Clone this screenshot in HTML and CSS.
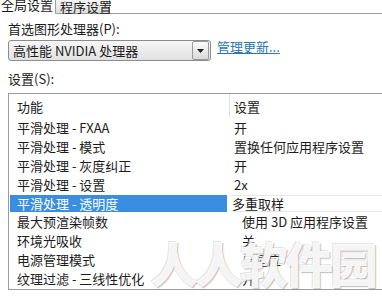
FILE: index.html
```html
<!DOCTYPE html>
<html lang="zh-CN">
<head>
    <meta charset="UTF-8">
    <title>全局设置</title>
    <link rel="stylesheet" href="styles.css">
</head>
<body>
    <div class="window">
        <div class="tabs">
            <div class="tab active">全局设置</div>
            <div class="tab">程序设置</div>
            <div class="tab-fill"></div>
        </div>

        <div class="panel">
            <div class="label first">首选图形处理器(P):</div>
            <div class="select-row">
                <div class="select">
                    <span class="select-text">高性能 NVIDIA 处理器</span>
                    <span class="select-btn">
                        <svg width="7" height="4" viewBox="0 0 7 4"><path d="M0 0h7L3.5 4z" fill="#222"/></svg>
                    </span>
                </div>
                <a class="link" href="#">管理更新...</a>
            </div>

            <div class="label">设置(S):</div>
            <div class="list">
                <div class="row head">
                    <div class="cell name">功能</div>
                    <div class="cell value divider">设置</div>
                </div>
                <div class="row">
                    <div class="cell name">平滑处理 - FXAA</div>
                    <div class="cell value">开</div>
                </div>
                <div class="row">
                    <div class="cell name">平滑处理 - 模式</div>
                    <div class="cell value">置换任何应用程序设置</div>
                </div>
                <div class="row">
                    <div class="cell name">平滑处理 - 灰度纠正</div>
                    <div class="cell value">开</div>
                </div>
                <div class="row">
                    <div class="cell name">平滑处理 - 设置</div>
                    <div class="cell value">2x</div>
                </div>
                <div class="row selected">
                    <div class="cell name">平滑处理 - 透明度</div>
                    <div class="cell value edit">多重取样</div>
                </div>
                <div class="row">
                    <div class="cell name">最大预渲染帧数</div>
                    <div class="cell value indent">使用 3D 应用程序设置</div>
                </div>
                <div class="row">
                    <div class="cell name">环境光吸收</div>
                    <div class="cell value indent">关</div>
                </div>
                <div class="row">
                    <div class="cell name">电源管理模式</div>
                    <div class="cell value indent">自适应</div>
                </div>
                <div class="row">
                    <div class="cell name">纹理过滤 - 三线性优化</div>
                    <div class="cell value indent">开</div>
                </div>
            </div>
        </div>

        <div class="watermark">人人软件园</div>
    </div>
</body>
</html>
```

FILE: styles.css
```css
body {
    margin: 0;
    background-color: #fff;
    font-family: "Noto Sans CJK SC", "DejaVu Sans", sans-serif;
    font-size: 13px;
    color: #1c1c1c;
    overflow: hidden;
}

.window {
    position: relative;
    width: 382px;
    height: 298px;
    overflow: hidden;
}

.tabs {
    display: flex;
    height: 14px;
}

.tab {
    line-height: 14px;
    padding: 0 4px;
    white-space: nowrap;
}

.tab.active {
    width: 50px;
    margin-left: -3px;
    margin-top: -2px;
    border-right: 1px solid #a0a0a0;
    background-color: #fff;
}

.tab:not(.active) {
    width: 45px;
    line-height: 13px;
    background: linear-gradient(#f4f4f4, #dedede);
    border-bottom: 1px solid #a0a0a0;
    border-right: 1px solid #a0a0a0;
}

.tab-fill {
    flex: 1;
    border-bottom: 1px solid #a0a0a0;
}

.panel {
    padding-left: 8px;
}

.label {
    line-height: 14px;
    margin-top: 11px;
}

.label.first {
    margin-top: 8px;
}

.select-row {
    display: flex;
    align-items: center;
    gap: 6px;
    margin-top: 4px;
}

.select {
    display: flex;
    align-items: center;
    justify-content: space-between;
    width: 197px;
    height: 19px;
    padding-left: 4px;
    border: 1px solid #8c8c8c;
    border-radius: 3px;
    background: linear-gradient(#f6f6f6, #e2e2e2);
}

.select-text {
    line-height: 19px;
}

.select-btn {
    display: flex;
    align-items: center;
    justify-content: center;
    width: 15px;
    height: 17px;
    margin-right: 1px;
    border: 1px solid #9a9a9a;
    border-radius: 2px;
    background: linear-gradient(#fbfbfb, #dadada);
}

.link {
    color: #2a76ad;
    text-decoration: underline;
    line-height: 14px;
    margin-top: -8px;
}

.list {
    margin-top: 7px;
    width: 400px;
    height: 195px;
    border: 1px solid #9c9c9c;
}

.row {
    display: flex;
    height: 19px;
    line-height: 19px;
}

.row.head {
    height: 24px;
    line-height: 26px;
}

.cell.name {
    width: 213px;
    padding-left: 8px;
    white-space: nowrap;
}

.cell.value {
    padding-left: 4px;
    white-space: nowrap;
}

.cell.divider {
    border-left: 1px solid #e0e0e0;
    margin-left: -1px;
}

.cell.indent {
    padding-left: 12px;
}

.row.selected {
    margin-top: 1px;
    height: 17px;
    line-height: 17px;
}

.row.selected .cell.name {
    width: 210px;
    margin-left: 1px;
    padding-left: 7px;
    background-color: #3a8ee0;
    color: #fff;
}

.row.selected .cell.edit {
    flex: 1;
    margin-left: 4px;
    padding-left: 1px;
    border-top: 1px solid #e8e8e8;
    border-bottom: 1px solid #e8e8e8;
    line-height: 15px;
}

.watermark {
    position: absolute;
    left: 150px;
    top: 230px;
    font-family: "Noto Sans CJK SC", sans-serif;
    font-size: 48px;
    font-weight: 900;
    letter-spacing: -3px;
    line-height: 64px;
    color: rgba(255, 255, 255, 0.9);
    text-shadow: 1px 1px 1px rgba(110, 110, 110, 0.45), -1px -1px 0 rgba(200, 200, 200, 0.5);
    white-space: nowrap;
    pointer-events: none;
}
```
